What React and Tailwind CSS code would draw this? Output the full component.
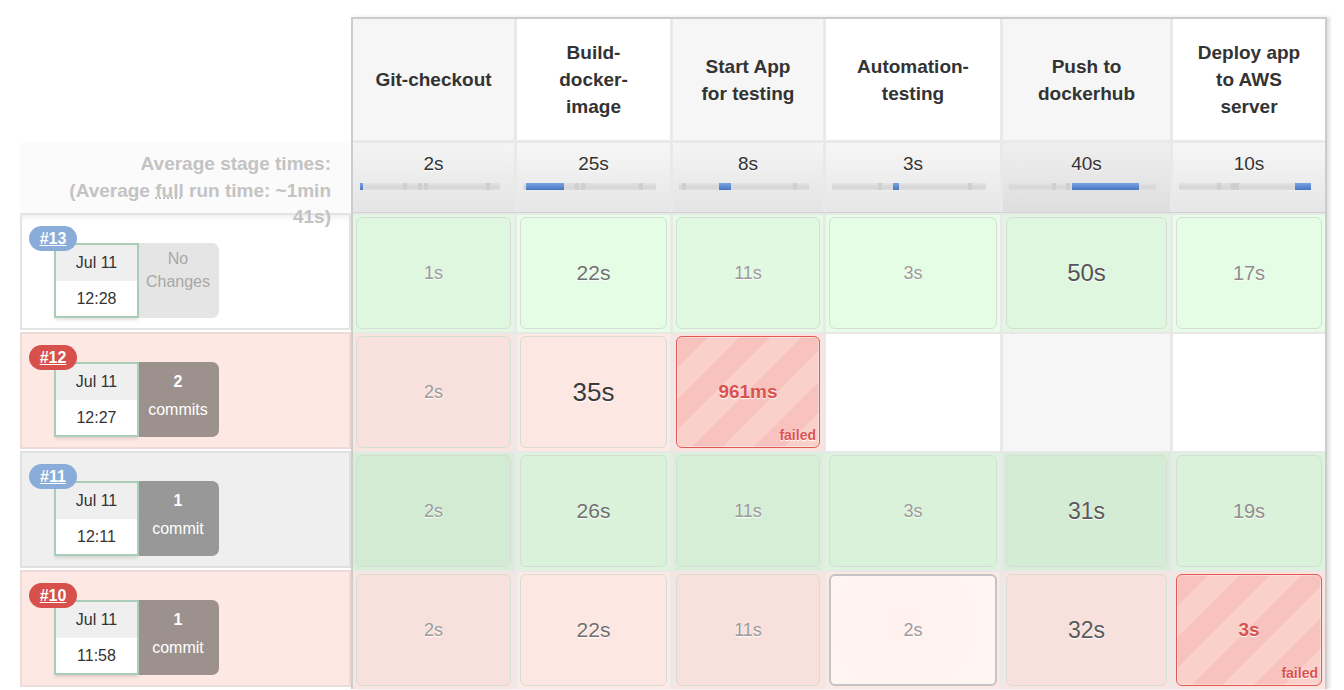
import React from "react";

const stages = [
  { lines: ["Git-checkout"], head: "bg-[#f6f6f6]", avgBg: "bg-[linear-gradient(#f4f4f4,#e4e4e4)]", avg: "2s", bar: [7, 140], blue: [0, 3], ticks: [43, 58, 64, 126] },
  { lines: ["Build-", "docker-", "image"], head: "bg-white", avgBg: "bg-[linear-gradient(#f6f6f6,#e6e6e6)]", avg: "25s", bar: [6, 133], blue: [3, 38], ticks: [52, 58, 116] },
  { lines: ["Start App", "for testing"], head: "bg-[#f6f6f6]", avgBg: "bg-[linear-gradient(#f4f4f4,#e4e4e4)]", avg: "8s", bar: [6, 130], blue: [40, 12], ticks: [3, 114] },
  { lines: ["Automation-", "testing"], head: "bg-white", avgBg: "bg-[linear-gradient(#f6f6f6,#e6e6e6)]", avg: "3s", bar: [6, 154], blue: [61, 6], ticks: [46, 136] },
  { lines: ["Push to", "dockerhub"], head: "bg-[#f6f6f6]", avgBg: "bg-[linear-gradient(#efefef,#dedede)]", avg: "40s", bar: [6, 147], blue: [63, 67], ticks: [43, 57] },
  { lines: ["Deploy app", "to AWS", "server"], head: "bg-white", avgBg: "bg-[linear-gradient(#f6f6f6,#e6e6e6)]", avg: "10s", bar: [6, 132], blue: [116, 16], ticks: [38, 52, 56] },
];

const S18 = "text-[18px] text-[#9b9b9b]";
const S20 = "text-[20px] text-[#8e8e8e]";
const S21 = "text-[21px] text-[#707070]";
const S23 = "text-[23px] text-[#5a5a5a]";
const S24 = "text-[24px] text-[#555555]";
const S26 = "text-[26px] text-[#3a3a3a]";

const builds = [
  {
    id: "#13",
    badge: "bg-[#89acd8]",
    box: "bg-white border-[#e4e4e4] shadow-[inset_0_6px_8px_-6px_rgba(0,0,0,0.12)]",
    time: "12:28",
    changes: "bg-[#e5e5e5] text-[#a8a8a8] pt-[4px] leading-[23px]",
    top: "No",
    bottom: "Changes",
    boldTop: false,
    cells: [
      { t: "1s", size: S18, td: "bg-[#e2f7e2]", bg: "bg-[#dff6df]" },
      { t: "22s", size: S21, td: "bg-[#e7fde7]", bg: "bg-[#e5fde5]" },
      { t: "11s", size: S18, td: "bg-[#e4fae4]", bg: "bg-[#e1f8e1]" },
      { t: "3s", size: S18, td: "bg-[#e7fde7]", bg: "bg-[#e5fde5]" },
      { t: "50s", size: S24, td: "bg-[#e2f7e2]", bg: "bg-[#dff6df]" },
      { t: "17s", size: S20, td: "bg-[#e7fde7]", bg: "bg-[#e5fde5]" },
    ],
  },
  {
    id: "#12",
    badge: "bg-[#d8504c]",
    box: "bg-[#fde8e4] border-[#ecdcd9]",
    time: "12:27",
    changes: "bg-[#9d918d] text-white pt-[6px] leading-[28px]",
    top: "2",
    bottom: "commits",
    boldTop: true,
    cells: [
      { t: "2s", size: S18, td: "bg-[#fae4e0]", bg: "bg-[#f8e1dd]" },
      { t: "35s", size: S26, td: "bg-[#fee9e5]", bg: "bg-[#fde7e3]" },
      { t: "961ms", failed: true, td: "bg-[#fbe4e0]" },
      { empty: true, td: "bg-white" },
      { empty: true, td: "bg-[#f6f6f6]" },
      { empty: true, td: "bg-white" },
    ],
  },
  {
    id: "#11",
    badge: "bg-[#89acd8]",
    box: "bg-[#efefef] border-[#e0e0e0]",
    time: "12:11",
    changes: "bg-[#989898] text-white pt-[6px] leading-[28px]",
    top: "1",
    bottom: "commit",
    boldTop: true,
    cells: [
      { t: "2s", size: S18, td: "bg-[#d6eed6]", bg: "bg-[#d3ebd3]" },
      { t: "26s", size: S21, td: "bg-[#dcf4dc]", bg: "bg-[#d9f2d9]" },
      { t: "11s", size: S18, td: "bg-[#d8f0d8]", bg: "bg-[#d6eed6]" },
      { t: "3s", size: S18, td: "bg-[#dcf4dc]", bg: "bg-[#d9f2d9]" },
      { t: "31s", size: S23, td: "bg-[#d6eed6]", bg: "bg-[#d4ecd4]" },
      { t: "19s", size: S20, td: "bg-[#dcf4dc]", bg: "bg-[#d9f2d9]" },
    ],
  },
  {
    id: "#10",
    badge: "bg-[#d8504c]",
    box: "bg-[#fde8e4] border-[#ecdcd9]",
    time: "11:58",
    changes: "bg-[#9d918d] text-white pt-[6px] leading-[28px]",
    top: "1",
    bottom: "commit",
    boldTop: true,
    cells: [
      { t: "2s", size: S18, td: "bg-[#fae4e0]", bg: "bg-[#f8e1dd]" },
      { t: "22s", size: S21, td: "bg-[#fee9e5]", bg: "bg-[#fde7e3]" },
      { t: "11s", size: S18, td: "bg-[#fae4e0]", bg: "bg-[#f8e1dd]" },
      { t: "2s", size: S18, td: "bg-[#fbe7e3]", bg: "bg-[radial-gradient(circle_at_45%_45%,#fff1ee,#fff6f4)]", light: true },
      { t: "32s", size: S23, td: "bg-[#fae4e0]", bg: "bg-[#f8e1dd]" },
      { t: "3s", failed: true, td: "bg-[#fbe4e0]" },
    ],
  },
];

const GRID = "grid grid-cols-[161px_153px_150px_174px_167px_152px] gap-x-[3px]";

function AvgBar({ s }) {
  return (
    <div
      className="relative h-[7px] mt-[8px] bg-[linear-gradient(#e4e4e4,#d6d6d6_60%,#dedede)]"
      style={{ marginLeft: s.bar[0], width: s.bar[1] }}
    >
      {s.ticks.map((x, i) => (
        <div key={i} className="absolute top-0 h-[7px] w-[4px] bg-[#cfcfcf]" style={{ left: x }} />
      ))}
      <div
        className="absolute top-0 h-[7px] bg-[linear-gradient(#7aa3e0,#5a88d0_60%,#4a75bb)]"
        style={{ left: s.blue[0], width: s.blue[1] }}
      />
    </div>
  );
}

function StageCell({ c }) {
  if (c.empty) return <div className={`h-full ${c.td}`} />;
  if (c.failed) {
    return (
      <div className={`h-full px-[3px] pt-[2px] pb-[3px] ${c.td}`}>
        <div className="relative h-full rounded-[6px] border border-[#df5a55] bg-[image:repeating-linear-gradient(135deg,#f8c2be_0px,#f8c2be_22px,#fad1ca_22px,#fad1ca_44px)] shadow-[inset_0_0_0_1px_rgba(255,255,255,0.35)] flex items-center justify-center">
          <span className="text-[19px] font-bold text-[#d9534f] [text-shadow:0_1px_1px_#fff]">{c.t}</span>
          <span className="absolute right-[3px] bottom-[1px] text-[14px] font-bold text-[#d9534f] [text-shadow:0_1px_1px_#fff]">
            failed
          </span>
        </div>
      </div>
    );
  }
  return (
    <div className={`h-full px-[3px] pt-[2px] pb-[3px] ${c.td}`}>
      <div
        className={`h-full rounded-[6px] flex items-center justify-center ${c.bg} ${
          c.light ? "border-2 border-[#c4c4c4]" : "border border-[#d6ddd6]"
        }`}
      >
        <span className={`${c.size} [text-shadow:0_1px_1px_#fff]`}>{c.t}</span>
      </div>
    </div>
  );
}

function BuildInfo({ b }) {
  return (
    <div className="h-[119px] pb-[2px]">
      <div className={`relative h-full border-2 ${b.box} pl-[32px] pt-[28px]`}>
        <div
          className={`absolute left-[7px] top-[11px] z-10 h-[25px] w-[48px] rounded-full ${b.badge} flex items-center justify-center text-[16px] font-bold text-white underline`}
        >
          {b.id}
        </div>
        <div className="flex">
          <div className="w-[83px] h-[75px] border-2 border-r-0 border-[#a9cdb9] flex flex-col shadow-[1px_2px_3px_rgba(0,0,0,0.12)]">
            <div className="h-[36px] bg-[#efefef] flex items-center justify-center text-[16px] text-[#333]">Jul 11</div>
            <div className="flex-1 bg-white flex items-center justify-center text-[16px] text-[#333]">{b.time}</div>
          </div>
          <div className="relative w-[82px] h-[75px]">
            <div className="absolute left-0 top-0 h-[75px] w-[2px] bg-[#a9cdb9]" />
            <div className={`h-full rounded-r-[7px] ${b.changes} flex flex-col items-center text-[16px]`}>
              <span className={b.boldTop ? "font-bold" : ""}>{b.top}</span>
              <span>{b.bottom}</span>
            </div>
          </div>
        </div>
      </div>
    </div>
  );
}

export default function App() {
  return (
    <div className="w-[1344px] h-[690px] overflow-hidden bg-white flex items-start font-['Liberation_Sans',Arial,sans-serif]">
      {/* left column: build list */}
      <div className="w-[351px] pl-[20px] shrink-0">
        <div className="h-[143px]" />
        <div className="relative z-20 h-[70px] bg-[#fbfbfb] pr-[20px] pt-[8px] text-right text-[19px] leading-[26.5px] font-bold text-[#c3c3c3]">
          <div>Average stage times:</div>
          <div>
            (Average <span className="underline decoration-dotted decoration-[#bbb]">full</span> run time: ~1min
          </div>
          <div>41s)</div>
        </div>
        {builds.map((b) => (
          <BuildInfo key={b.id} b={b} />
        ))}
      </div>

      {/* stage table */}
      <div className="mt-[17px] border-t-2 border-l-2 border-r-2 border-[#cccccc] bg-[#e9e9e9] shadow-[3px_0_3px_rgba(0,0,0,0.12)]">
        <div className={`${GRID} h-[121px] mb-[3px]`}>
          {stages.map((s, i) => (
            <div
              key={i}
              className={`${s.head} flex flex-col items-center justify-center text-center text-[19px] leading-[27px] font-bold text-[#333]`}
            >
              {s.lines.map((l) => (
                <span key={l}>{l}</span>
              ))}
            </div>
          ))}
        </div>
        <div className={`${GRID} h-[70px] border-b border-[#d2d2d2]`}>
          {stages.map((s, i) => (
            <div key={i} className={`${s.avgBg} pt-[10px]`}>
              <div className="text-center text-[19px] leading-[22px] text-[#333] [text-shadow:0_1px_1px_#fff]">{s.avg}</div>
              <AvgBar s={s} />
            </div>
          ))}
        </div>
        {builds.map((b) => (
          <div key={b.id} className={`${GRID} h-[119px] border-t-2 border-[#e8e8e8]`}>
            {b.cells.map((c, i) => (
              <StageCell key={i} c={c} />
            ))}
          </div>
        ))}
      </div>
    </div>
  );
}
